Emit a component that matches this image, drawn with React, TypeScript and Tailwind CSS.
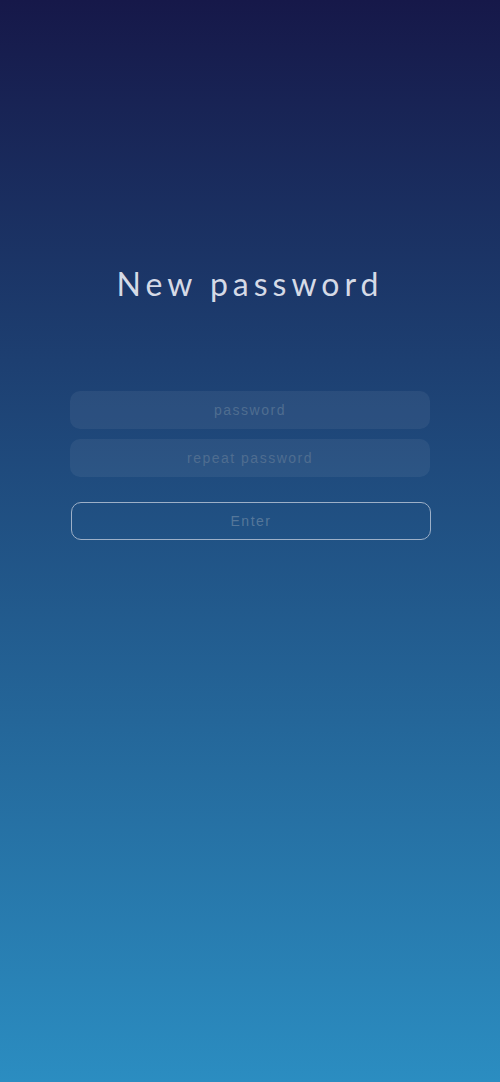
export default function App() {
  return (
    <div className="w-full min-h-[1082px] bg-[linear-gradient(to_bottom,#161849,#2b8dc1)] flex flex-col items-center">
      <h1 className="mt-[264px] text-[32px] leading-[40px] tracking-[5px] text-[#d5dae6] font-['Lato',sans-serif] font-normal">
        New password
      </h1>
      <div className="mt-[87px] w-[360px] flex flex-col gap-[10px] font-['Liberation_Sans',sans-serif]">
        <input
          type="password"
          placeholder="password"
          className="h-[38px] w-full rounded-[10px] bg-white/[0.06] text-center text-[14px] tracking-[1.5px] text-[#5d7b9c] placeholder:text-[#4f6d90] outline-none"
        />
        <input
          type="password"
          placeholder="repeat password"
          className="h-[38px] w-full rounded-[10px] bg-white/[0.06] text-center text-[14px] tracking-[1.5px] text-[#5d7b9c] placeholder:text-[#4f6d90] outline-none"
        />
        <button className="mt-[15px] ml-[1px] h-[38px] w-[360px] rounded-[10px] border border-[#9db0c8] text-center text-[14px] tracking-[1.5px] text-[#55779a]">
          Enter
        </button>
      </div>
    </div>
  );
}
